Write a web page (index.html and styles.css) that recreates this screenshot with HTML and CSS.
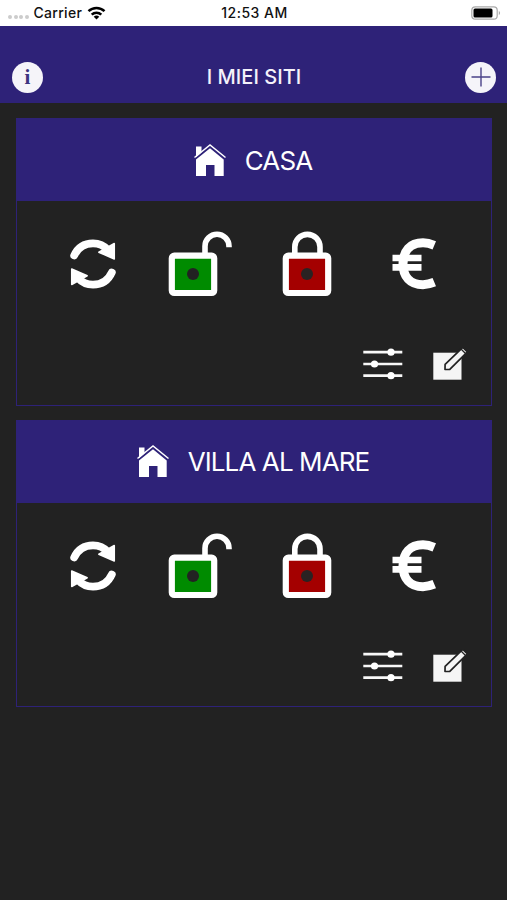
FILE: index.html
```html
<!DOCTYPE html>
<html lang="it">
<head>
<meta charset="utf-8">
<title>I miei siti</title>
<link rel="stylesheet" href="styles.css">
</head>
<body>
<svg class="defs" aria-hidden="true">
  <symbol id="house" viewBox="0 0 32 33">
    <path fill="#fff" d="M2 2.500h5.500v6L2 13.300zM2 15.500L16 4.300 29.700 15.500V32H20.500V21H12V32H2z"/>
    <path fill="none" stroke="#fff" stroke-width="1.500" d="M.5 13.500 16 1 31.500 13.500"/>
  </symbol>
  <symbol id="refresh" viewBox="0 0 46 50">
    <g id="turn">
      <path fill="none" stroke="#fff" stroke-width="7.800" stroke-linecap="round" d="M4.200 16.500C8 8 15 4.300 23 4.300 29 4.300 34 6.500 38 11"/>
      <path fill="#fff" stroke="#fff" stroke-width="1.500" stroke-linejoin="round" d="M44.300 4.500V20L28.800 13.200z"/>
    </g>
    <use href="#turn" transform="rotate(180 23 25)"/>
  </symbol>
  <symbol id="unlock" viewBox="0 0 64 66">
    <path fill="none" stroke="#fff" stroke-width="5.600" d="M37 24V15.300a12 12 0 0 1 24 0v.9"/>
    <rect x="3.800" y="24.700" width="42.400" height="37.300" rx="2.500" fill="#008b00" stroke="#fff" stroke-width="6.200"/>
    <circle cx="25" cy="43" r="6" fill="#222"/>
  </symbol>
  <symbol id="lock" viewBox="0 0 50 66">
    <path fill="none" stroke="#fff" stroke-width="5.600" d="M12.800 24V16a12.600 12.600 0 0 1 25.200 0v8"/>
    <rect x="3.800" y="24.700" width="42.400" height="37.300" rx="2.500" fill="#a40000" stroke="#fff" stroke-width="6.200"/>
    <circle cx="25" cy="43" r="6" fill="#2a2222"/>
  </symbol>
  <symbol id="euro" viewBox="0 0 44 52">
    <path fill="none" stroke="#fff" stroke-width="9" d="M42.300 7.300C38 5.500 35 4.800 31 4.800 18 4.800 11 13 11 25.700S18 46.700 31 46.700C35 46.700 38 46 42.300 44.200"/>
    <path fill="none" stroke="#fff" stroke-width="6.600" d="M.5 20H29.500M.5 29.400H29.500"/>
  </symbol>
  <symbol id="sliders" viewBox="0 0 40 34">
    <path fill="none" stroke="#f7f7f7" stroke-width="2.700" d="M.3 5.200H39.300M.3 17H39.300M.3 28.700H39.300"/>
    <g fill="#fff"><circle cx="28" cy="5.200" r="3.600"/><circle cx="11.500" cy="17" r="3.600"/><circle cx="28" cy="28.700" r="3.600"/></g>
  </symbol>
  <symbol id="edit" viewBox="0 0 35 34">
    <path fill="#f5f5f5" d="M.3 5.700H28.500V32.700H.3z"/>
    <path fill="#f5f5f5" stroke="#222" stroke-width="1.700" stroke-linejoin="round" d="M12.100 17.300 29.800 .3 34.400 4.900 16.800 22.400 12 22.500z"/>
    <path stroke="#222" stroke-width="1.200" d="M28 2 32.500 6.500"/>
  </symbol>
</svg>

<div class="status">
  <div class="carrier">
    <span class="dots"><i></i><i></i><i></i><i></i></span>
    <span>Carrier</span>
    <svg class="wifi" viewBox="0 0 18 14"><g fill="none" stroke="#000" stroke-width="2.500"><path d="M1 5.200a11.500 11.500 0 0 1 16 0"/><path d="M4.200 8.600a7 7 0 0 1 9.600 0"/></g><path d="M9 13.500 6.200 10.800a4 4 0 0 1 5.600 0z"/></svg>
  </div>
  <time>12:53 AM</time>
  <svg class="battery" viewBox="0 0 30 14"><rect x=".8" y=".8" width="25.400" height="12.400" rx="3.500" fill="#fff" stroke="#aaa" stroke-width="1.200"/><rect x="2.500" y="2.500" width="19" height="9" rx="1.500"/><path fill="#aaa" d="M27.800 5c1.700.6 1.700 3.400 0 4z"/></svg>
</div>

<header class="bar">
  <button class="round info" aria-label="Info">i</button>
  <h1>I MIEI SITI</h1>
  <button class="round" aria-label="Aggiungi"><svg viewBox="0 0 20 20"><path d="M10 .5v19M.5 10h19" stroke="#4a4288" stroke-width="1.400"/></svg></button>
</header>

<main>
  <section class="card">
    <h2><svg><use href="#house"/></svg><span class="name">CASA</span></h2>
    <div class="actions">
      <svg class="refresh"><use href="#refresh"/></svg>
      <svg class="unlock"><use href="#unlock"/></svg>
      <svg class="lock"><use href="#lock"/></svg>
      <svg class="euro"><use href="#euro"/></svg>
    </div>
    <div class="tools">
      <svg class="sliders"><use href="#sliders"/></svg>
      <svg class="edit"><use href="#edit"/></svg>
    </div>
  </section>
  <section class="card">
    <h2><svg><use href="#house"/></svg><span class="name">VILLA AL MARE</span></h2>
    <div class="actions">
      <svg class="refresh"><use href="#refresh"/></svg>
      <svg class="unlock"><use href="#unlock"/></svg>
      <svg class="lock"><use href="#lock"/></svg>
      <svg class="euro"><use href="#euro"/></svg>
    </div>
    <div class="tools">
      <svg class="sliders"><use href="#sliders"/></svg>
      <svg class="edit"><use href="#edit"/></svg>
    </div>
  </section>
</main>
</body>
</html>
```
FILE: styles.css
```css
* { box-sizing: border-box; }
body {
  margin: 0;
  height: 900px;
  overflow: hidden;
  background: #222;
  font-family: Inter, "Liberation Sans", sans-serif;
}
svg { display: block; }
.defs { display: none; }

.status {
  display: grid;
  grid-template-columns: 1fr auto 1fr;
  align-items: center;
  height: 26px;
  padding: 0 6px 0 8px;
  background: #fff;
  color: #111;
  font-size: 14px;
  font-weight: 500;
  letter-spacing: 0.300px;
  line-height: 26px;
}
.status time { letter-spacing: 0.500px; }
.carrier { display: flex; align-items: center; }
.dots { display: flex; gap: 1.500px; margin: 7px 5px 0 0; }
.dots i { width: 4px; height: 4px; border-radius: 50%; background: #ccc; }
.wifi { width: 19px; height: 14px; margin-left: 5px; }
.battery { width: 30px; height: 14px; justify-self: end; }

.bar {
  display: flex;
  align-items: center;
  justify-content: space-between;
  height: 77px;
  padding: 25px 11px 0 12px;
  background: #2e2278;
}
.bar h1 {
  margin: 0;
  color: #f4f2fa;
  font-size: 20px;
  font-weight: 500;
  letter-spacing: 0.050px;
}
.round {
  display: flex;
  align-items: center;
  justify-content: center;
  width: 31px;
  height: 31px;
  padding: 0;
  border: 0;
  border-radius: 50%;
  background: #f5f4f9;
  color: #3d3480;
}
.round svg { width: 20px; height: 20px; }
.info { font: bold 21px/31px "Liberation Serif", serif; }

main {
  display: flex;
  flex-direction: column;
  gap: 14px;
  padding: 15px 15px 0 16px;
}
.card {
  height: 287.500px;
  border: 1px solid #2e2278;
}
.card h2 {
  display: flex;
  align-items: center;
  justify-content: center;
  gap: 19px;
  height: 82px;
  margin: 0;
  padding-right: 2px;
  background: #2e2278;
  color: #fff;
  font-size: 26px;
  font-weight: 400;
  letter-spacing: -0.900px;
}
.card h2 svg { width: 32px; height: 33px; }
.name { white-space: nowrap; }
.actions {
  display: grid;
  grid-template-columns: repeat(4, 1fr);
  place-items: center;
  height: 126px;
  padding: 0 24px 0 22px;
}
.refresh { width: 46px; height: 50px; margin-left: 1px; }
.unlock { width: 64px; height: 66px; }
.lock { width: 50px; height: 66px; }
.euro { width: 44px; height: 52px; }
.tools {
  display: flex;
  justify-content: flex-end;
  gap: 30px;
  padding: 20px 23px 0 0;
}
.sliders { width: 40px; height: 34px; }
.edit { width: 35px; height: 34px; }
```
